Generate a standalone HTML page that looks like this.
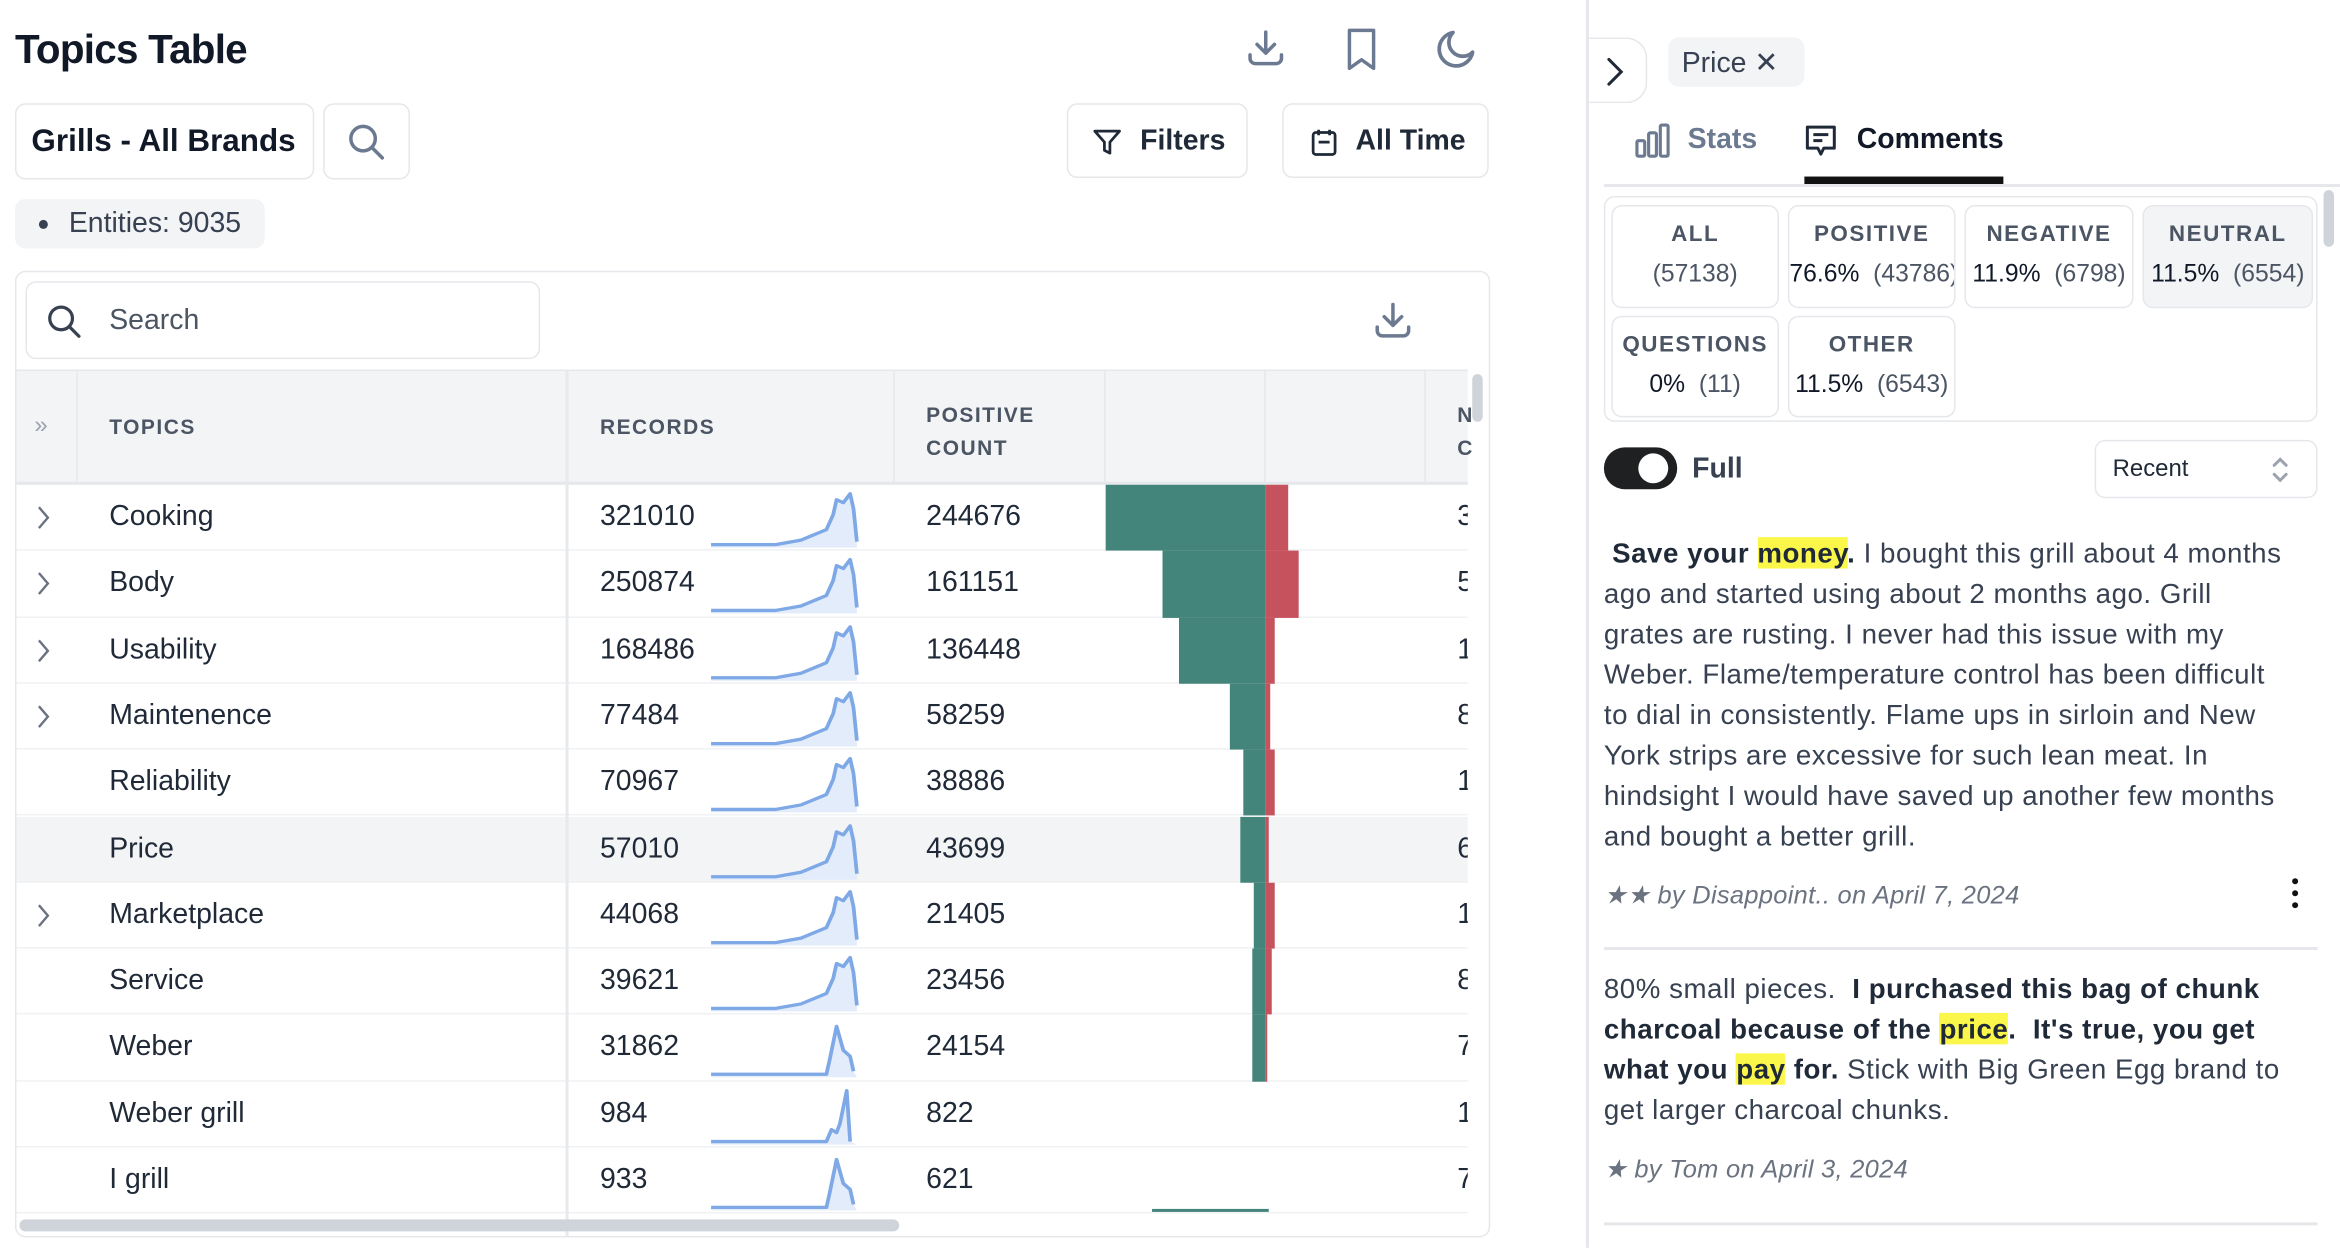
<!DOCTYPE html>
<html><head><meta charset="utf-8"><style>
*{box-sizing:border-box;margin:0;padding:0}
html,body{width:2340px;height:1248px;overflow:hidden;background:#fff}
#w{position:absolute;left:0;top:0;width:1564px;height:834px;transform:scale(1.49617);transform-origin:0 0;font-family:"Liberation Sans",sans-serif;color:#111827}
.a{position:absolute}
.btn{position:absolute;border:1.5px solid #e5e7eb;border-radius:7px;background:#fff}
.t{font-size:19px;color:#1f2937;white-space:nowrap}
.row{position:absolute;left:0;width:970px;height:44.3px;border-bottom:1.5px solid #f0f1f3}
.hd{font-size:14px;font-weight:bold;color:#4b5563;letter-spacing:1px}
.tile{position:absolute;border:1.5px solid #e5e7eb;border-radius:7px;text-align:center;background:#fff;overflow:hidden;white-space:nowrap}
.tile b{display:block;font-size:15px;color:#4b5563;letter-spacing:1px;margin-top:10px}
.tile span{display:block;font-size:16.5px;color:#4b5563;margin-top:9px}
.tile span i{font-style:normal;color:#111827}
.cm{position:absolute;left:1072px;width:458px;font-size:18.5px;line-height:27px;color:#374151;letter-spacing:0.35px}
.cm strong{color:#1f2937}
mark{background:#fbf74a;color:inherit}
.meta{position:absolute;left:1072px;font-size:17px;font-style:italic;color:#6b7280;letter-spacing:0.2px}
</style></head><body><div id="w">

<div class="a" style="left:10px;top:18px;font-size:27px;font-weight:bold;letter-spacing:-0.5px">Topics Table</div>
<svg class="a" style="left:832px;top:18px" width="28" height="28" viewBox="0 0 24 24" fill="none" stroke="#6b7a90" stroke-width="2" stroke-linecap="round" stroke-linejoin="round"><path d="M12 3v12M7 10l5 5 5-5M3 16v2a3 3 0 003 3h12a3 3 0 003-3v-2"/></svg>
<svg class="a" style="left:896px;top:18px" width="28" height="30" viewBox="0 0 24 26" fill="none" stroke="#6b7a90" stroke-width="2" stroke-linejoin="round"><path d="M5 2h14v22l-7-5-7 5z"/></svg>
<svg class="a" style="left:958px;top:18px" width="30" height="30" viewBox="0 0 24 24" fill="none" stroke="#6b7a90" stroke-width="2" stroke-linejoin="round"><path d="M21 13.5A9 9 0 1110.5 3a7 7 0 0010.5 10.5z"/></svg>

<div class="btn" style="left:10px;top:69px;width:200px;height:51px"><div class="a" style="left:10px;top:13px;font-size:21px;font-weight:bold">Grills - All Brands</div></div>
<div class="btn" style="left:216px;top:69px;width:58px;height:51px"><svg class="a" style="left:14px;top:11px" width="28" height="28" viewBox="0 0 24 24" fill="none" stroke="#6b7a90" stroke-width="2" stroke-linecap="round"><circle cx="10" cy="10" r="7"/><path d="M15 15l6 6"/></svg></div>
<div class="btn" style="left:713px;top:69px;width:121px;height:50px"><svg class="a" style="left:15px;top:14px" width="22" height="22" viewBox="0 0 24 24" fill="none" stroke="#1f2937" stroke-width="2" stroke-linejoin="round"><path d="M3 4h18l-7 8v8l-4-2v-6z"/></svg><div class="a t" style="left:48px;top:14px;font-size:19px;font-weight:bold;color:#1f2937">Filters</div></div>
<div class="btn" style="left:857px;top:69px;width:138px;height:50px"><svg class="a" style="left:16px;top:14px" width="22" height="22" viewBox="0 0 24 24" fill="none" stroke="#1f2937" stroke-width="2"><rect x="4" y="5" width="16" height="16" rx="2"/><path d="M8 3v4M16 3v4M8 12h8"/></svg><div class="a t" style="left:48px;top:14px;font-size:19px;font-weight:bold;color:#1f2937">All Time</div></div>

<div class="a" style="left:10px;top:133px;width:167px;height:33px;background:#f3f4f6;border-radius:7px"><div class="a" style="left:16px;top:14px;width:6px;height:6px;border-radius:3px;background:#374151"></div><div class="a t" style="left:36px;top:6px;color:#374151">Entities: 9035</div></div>

<div class="a" style="left:10px;top:181px;width:986px;height:646px;border:1.5px solid #e5e7eb;border-radius:7px;overflow:hidden">
 <div class="btn" style="left:6px;top:6px;width:344px;height:52px"><svg class="a" style="left:12px;top:13px" width="26" height="26" viewBox="0 0 24 24" fill="none" stroke="#374151" stroke-width="2" stroke-linecap="round"><circle cx="10" cy="10" r="7"/><path d="M15 15l6 6"/></svg><div class="a t" style="left:55px;top:15px;color:#4b5563">Search</div></div>
 <svg class="a" style="left:906px;top:18px" width="28" height="28" viewBox="0 0 24 24" fill="none" stroke="#6b7a90" stroke-width="2" stroke-linecap="round" stroke-linejoin="round"><path d="M12 3v12M7 10l5 5 5-5M3 16v2a3 3 0 003 3h12a3 3 0 003-3v-2"/></svg>
 <div class="a" style="left:0;top:65px;width:970px;height:77px;background:#f3f4f6;border-top:1.5px solid #e5e7eb;border-bottom:2px solid #e5e7eb"></div>
 <div id="rows"></div>
 <div class="a" style="left:40px;top:65px;width:1px;height:77px;background:#e8e9ec"></div>
 <div class="a" style="left:367px;top:65px;width:2px;height:580px;background:#e8e9ec"></div>
 <div class="a" style="left:586px;top:65px;width:1px;height:77px;background:#e5e7eb"></div>
 <div class="a" style="left:727px;top:65px;width:1px;height:77px;background:#e5e7eb"></div>
 <div class="a" style="left:834px;top:65px;width:1px;height:77px;background:#e5e7eb"></div>
 <div class="a" style="left:941px;top:65px;width:1px;height:77px;background:#e5e7eb"></div>
 <div class="a" style="left:12px;top:94px;color:#9ca3af;font-size:16px">»</div>
 <div class="a hd" style="left:62px;top:95px">TOPICS</div>
 <div class="a hd" style="left:390px;top:95px">RECORDS</div>
 <div class="a hd" style="left:608px;top:84px;line-height:22px">POSITIVE<br>COUNT</div>
 <div class="a hd" style="left:963px;top:84px;line-height:22px">N<br>C</div>
 <div class="a" style="left:973px;top:68px;width:7px;height:32px;border-radius:4px;background:#cfd3da"></div>
 <div class="a" style="left:2px;top:633px;width:588px;height:8px;border-radius:4px;background:#cfd3da"></div>
 <div class="a" style="left:759px;top:626px;width:78px;height:2px;background:#44857b"></div>
</div>

<div class="a" style="left:1060px;top:0;width:1.5px;height:834px;background:#e5e7eb"></div>
<div class="a" style="left:1060px;top:25px;width:41px;height:44px;border:1.5px solid #e5e7eb;border-left:none;border-radius:0 14px 14px 0"><svg class="a" style="left:8px;top:10px" width="22" height="24" viewBox="0 0 24 24" fill="none" stroke="#1f2937" stroke-width="2.2" stroke-linecap="round"><path d="M8 3l9 9-9 9"/></svg></div>
<div class="a" style="left:1115px;top:25px;width:91px;height:33px;background:#f3f4f6;border-radius:7px"><div class="a t" style="left:9px;top:6px;color:#374151">Price ✕</div></div>
<svg class="a" style="left:1092px;top:81px" width="25" height="26" viewBox="0 0 24 24" fill="none" stroke="#6b7a90" stroke-width="2"><rect x="2" y="12" width="5" height="10" rx="1"/><rect x="9.5" y="7" width="5" height="15" rx="1"/><rect x="17" y="2" width="5" height="20" rx="1"/></svg>
<div class="a" style="left:1128px;top:83px;font-size:19px;font-weight:bold;color:#6b7a90">Stats</div>
<svg class="a" style="left:1205px;top:82px" width="24" height="24" viewBox="0 0 24 24" fill="none" stroke="#1f2937" stroke-width="2" stroke-linejoin="round"><path d="M3 3h18v14h-7l-2 4-2-4H3z"/><path d="M7 8h10M7 12h6"/></svg>
<div class="a" style="left:1241px;top:83px;font-size:19px;font-weight:bold;color:#111827">Comments</div>
<div class="a" style="left:1206px;top:118px;width:133px;height:5px;background:#111"></div>
<div class="a" style="left:1072px;top:123px;width:492px;height:1.5px;background:#e5e7eb"></div>
<div class="a" style="left:1553px;top:127px;width:7px;height:38px;border-radius:4px;background:#cfd3da"></div>

<div class="a" style="left:1072px;top:131px;width:477px;height:151px;border:1.5px solid #e5e7eb;border-radius:7px"></div>
<div class="tile" style="left:1077px;top:137px;width:112px;height:69px"><b>ALL</b><span>(57138)</span></div>
<div class="tile" style="left:1195px;top:137px;width:112px;height:69px"><b>POSITIVE</b><span style="text-align:left"><i>76.6%</i>&nbsp; (43786)</span></div>
<div class="tile" style="left:1313px;top:137px;width:113px;height:69px"><b>NEGATIVE</b><span><i>11.9%</i>&nbsp; (6798)</span></div>
<div class="tile" style="left:1432px;top:137px;width:114px;height:69px;background:#f3f4f6"><b>NEUTRAL</b><span><i>11.5%</i>&nbsp; (6554)</span></div>
<div class="tile" style="left:1077px;top:211px;width:112px;height:68px"><b>QUESTIONS</b><span><i>0%</i>&nbsp; (11)</span></div>
<div class="tile" style="left:1195px;top:211px;width:112px;height:68px"><b>OTHER</b><span><i>11.5%</i>&nbsp; (6543)</span></div>

<div class="a" style="left:1072px;top:299px;width:49px;height:28px;border-radius:14px;background:#1f2022"><div class="a" style="left:23px;top:4px;width:20px;height:20px;border-radius:10px;background:#fff"></div></div>
<div class="a" style="left:1131px;top:303px;font-size:19px;font-weight:bold;color:#374151">Full</div>
<div class="btn" style="left:1400px;top:294px;width:149px;height:39px"><div class="a" style="left:11px;top:10px;font-size:16px;color:#1f2937">Recent</div><svg class="a" style="left:116px;top:9px" width="14" height="20" viewBox="0 0 14 20" fill="none" stroke="#9ca3af" stroke-width="2" stroke-linecap="round"><path d="M3 7l4-4 4 4M3 13l4 4 4-4"/></svg></div>

<div class="cm" style="top:356px">&nbsp;<strong>Save your <mark>money</mark>.</strong> I bought this grill about 4 months ago and started using about 2 months ago. Grill<br>grates are rusting. I never had this issue with my<br>Weber. Flame/temperature control has been difficult<br>to dial in consistently. Flame ups in sirloin and New<br>York strips are excessive for such lean meat. In<br>hindsight I would have saved up another few months<br>and bought a better grill.</div>
<div class="meta" style="top:589px">★★ by Disappoint.. on April 7, 2024</div>
<div class="a" style="left:1532px;top:587px;width:5px;line-height:0"><div style="width:4px;height:4px;border-radius:2px;background:#111;margin-bottom:4px"></div><div style="width:4px;height:4px;border-radius:2px;background:#111;margin-bottom:4px"></div><div style="width:4px;height:4px;border-radius:2px;background:#111"></div></div>
<div class="a" style="left:1072px;top:633px;width:477px;height:1.5px;background:#e5e7eb"></div>
<div class="cm" style="top:647px">80% small pieces.&nbsp; <strong>I purchased this bag of chunk<br>charcoal because of the <mark>price</mark>.&nbsp; It's true, you get<br>what you <mark>pay</mark> for.</strong> Stick with Big Green Egg brand to<br>get larger charcoal chunks.</div>
<div class="meta" style="top:772px">★ by Tom on April 3, 2024</div>
<div class="a" style="left:1072px;top:817px;width:477px;height:1.5px;background:#e5e7eb"></div>

</div>
<script>
var d=[["Cooking","321010","244676",1,738,860,"3"],["Body","250874","161151",1,776,867,"5"],["Usability","168486","136448",1,787,851,"1"],["Maintenence","77484","58259",1,821,848,"8"],["Reliability","70967","38886",0,830,851,"1"],["Price","57010","43699",0,828,847,"6"],["Marketplace","44068","21405",1,837,851,"1"],["Service","39621","23456",0,836,849,"8"],["Weber","31862","24154",0,836,846,"7"],["Weber grill","984","822",0,0,0,"1"],["I grill","933","621",0,0,0,"7"]];
var h="";
for(var i=0;i<d.length;i++){var r=d[i],ty=142+i*44.3;
var bg=i==5?"background:#f3f4f6;":"";
var p=i>=8?(i==9?"M2 38 L70 38 L73 30 L76 32 L78 26 L82 4 L84 38":"M2 38 L70 38 L72 28 L76 6 L80 22 L84 26 L86 36"):"M2 38 L40 38 L55 35 L70 28 L74 18 L76 8 L80 10 L84 4 L86 14 L88 36";
h+='<div class="row" style="top:'+ty+'px;'+bg+'">'+
(r[3]?'<svg class="a" style="left:12px;top:13px" width="12" height="18" viewBox="0 0 12 18" fill="none" stroke="#6b7280" stroke-width="1.6"><path d="M3 2l6 7-6 7"/></svg>':'')+
'<div class="a t" style="left:62px;top:11px">'+r[0]+'</div>'+
'<div class="a t" style="left:390px;top:11px">'+r[1]+'</div>'+
'<svg class="a" style="left:462px;top:2px" width="102" height="42" viewBox="0 0 90 42" preserveAspectRatio="none"><path d="'+p+' L88 40 L2 40Z" fill="#e3ecfa"/><path d="'+p+'" fill="none" stroke="#7ea8e6" stroke-width="2.2" stroke-linejoin="round"/></svg>'+
'<div class="a t" style="left:608px;top:11px">'+r[2]+'</div>'+
(r[4]?'<div class="a" style="left:'+(r[4]-10)+'px;top:0;width:'+(845-r[4])+'px;height:44.3px;background:#44857b"></div><div class="a" style="left:835px;top:0;width:'+(r[5]-845)+'px;height:44.3px;background:#c5525d"></div>':'')+
'<div class="a" style="left:963px;top:11px;width:7px;overflow:hidden;font-size:19px;color:#1f2937">'+r[6]+'</div></div>';}
document.getElementById("rows").innerHTML=h;
</script>
</body></html>
